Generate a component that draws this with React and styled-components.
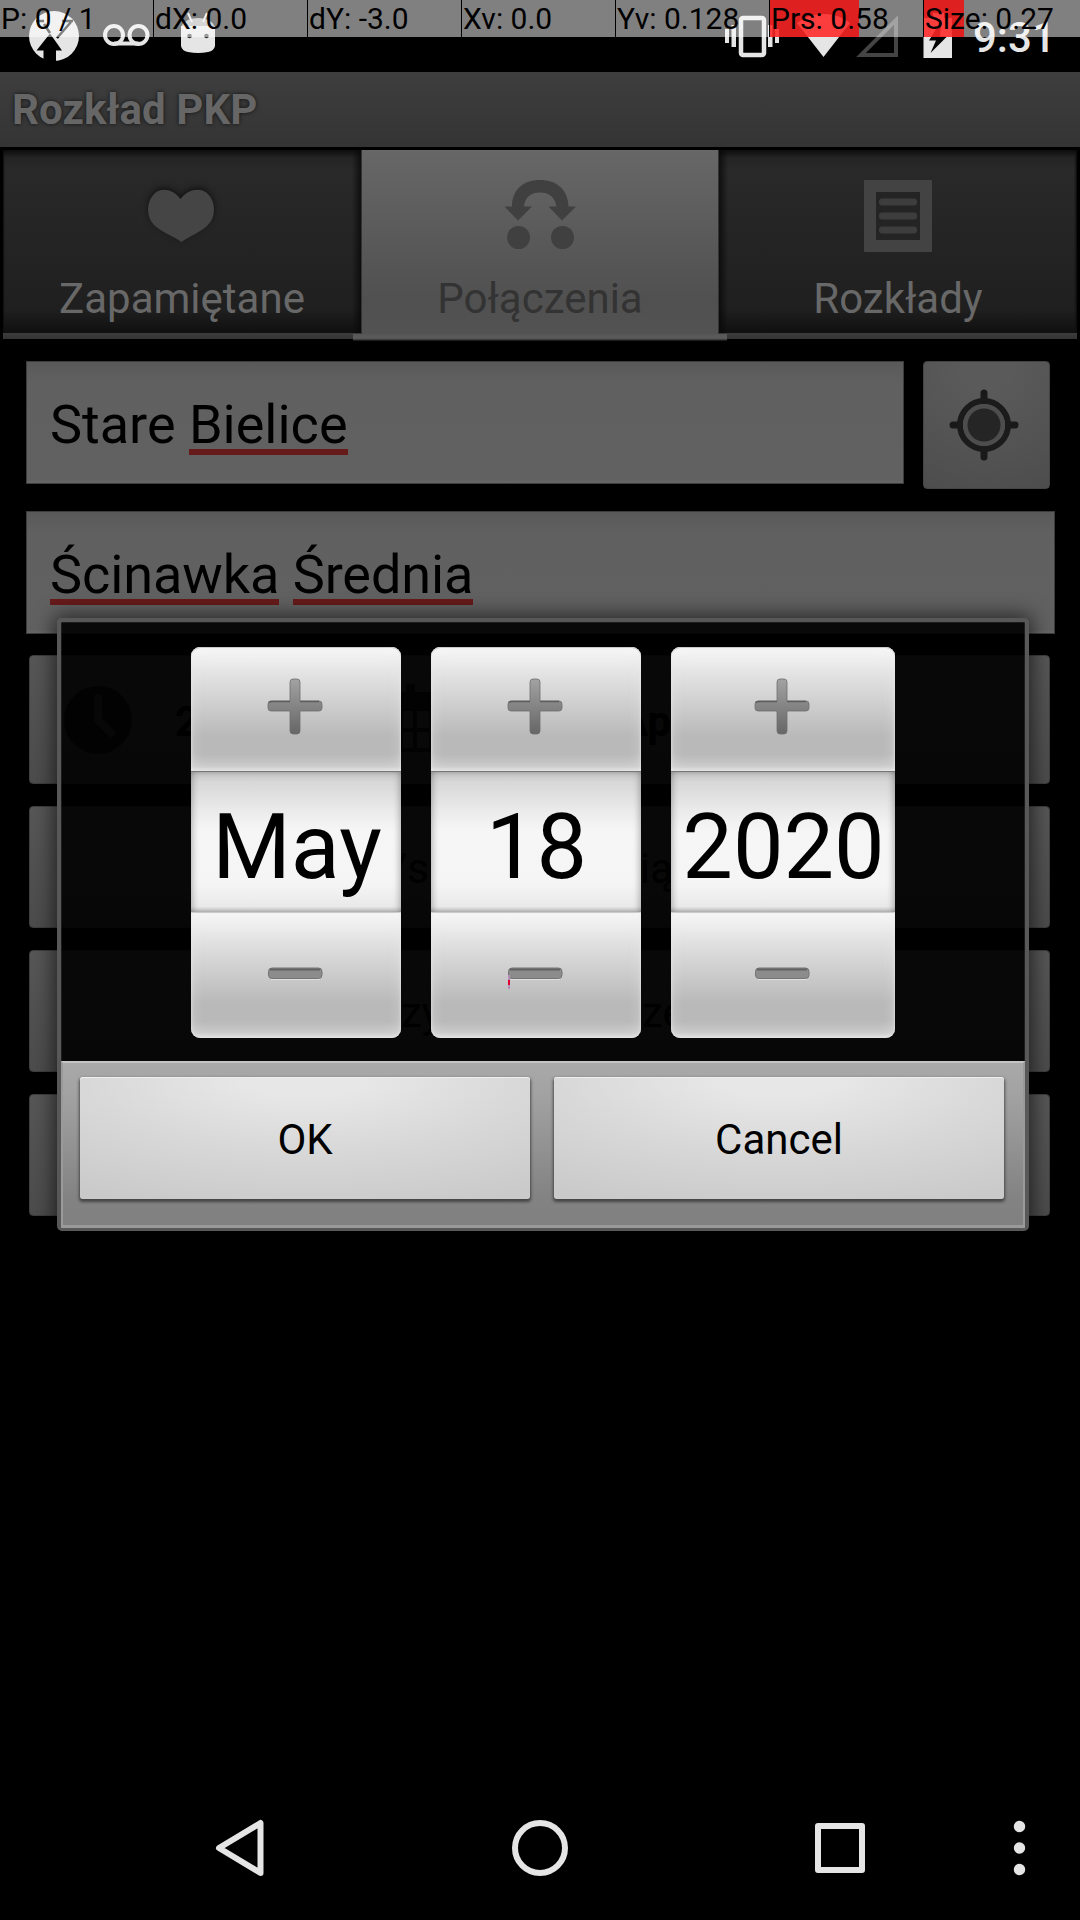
import React from "react";
import styled, { createGlobalStyle } from "styled-components";

const Global = createGlobalStyle`
  * { box-sizing: border-box; }
  body { margin: 0; background: #000; }
`;

const Screen = styled.div`
  position: relative;
  display: flex;
  flex-direction: column;
  width: 1080px;
  height: 1920px;
  overflow: hidden;
  background: #000;
  font-family: Roboto, "Noto Sans", sans-serif;
`;

/* status bar */
const StatusBar = styled.header`
  display: flex;
  justify-content: space-between;
  flex: none;
  height: 72px;
`;
const StatusIcons = styled.svg`
  display: block;
  height: 72px;
  width: ${(p) => p.$w}px;
`;
const StatusRight = styled.div`
  display: flex;
`;
const Clock = styled.div`
  width: 108px;
  padding: 13px 0 0 1px;
  font-size: 42px;
  line-height: 49px;
  font-weight: 500;
  color: #e5e5e5;
`;

/* pointer-location readout */
const PointerBar = styled.div`
  position: absolute;
  top: 0;
  left: 0;
  width: 1080px;
  height: 37px;
  display: flex;
  gap: 1px;
`;
const PointerCell = styled.div`
  flex: none;
  width: ${(p) => p.$w ?? 153}px;
  height: 37px;
  padding-left: 1px;
  white-space: nowrap;
  font-size: 30px;
  line-height: 37px;
  color: #000;
  background: ${(p) =>
    p.$fill
      ? `linear-gradient(90deg, rgba(255,0,0,.75) ${p.$fill}px, transparent ${p.$fill}px), rgba(255,255,255,.5)`
      : "rgba(255,255,255,.5)"};
  box-shadow: 1px 0 0 #000;
`;

const TitleBar = styled.div`
  flex: none;
  height: 75px;
  padding-left: 12px;
  font-size: 42px;
  line-height: 75px;
  font-weight: 700;
  letter-spacing: 0.1px;
  color: #666;
  text-shadow: 0 0 4px rgba(0, 0, 0, 0.7);
  background: linear-gradient(#3e3e3e, #343434);
`;

/* tabs */
const Tabs = styled.nav`
  flex: none;
  display: flex;
  height: 192px;
  margin-top: 3px;
  padding: 0 3px;
`;
const Tab = styled.div`
  display: flex;
  flex-direction: column;
  align-items: center;
  width: 358px;
  height: 189px;
  color: #686868;
  background: linear-gradient(#3c3c3c, #343434) no-repeat 0 100% / 100% 6px,
    linear-gradient(90deg, #0d0d0d, transparent 2px, transparent 349px, rgba(8, 8, 8, 0.8)),
    linear-gradient(#0d0d0d, #242424 8px, #292929 20px, #1f1f1f 160px, #0f0f0f 183px);
`;
const RightTab = styled(Tab)`
  background: linear-gradient(#3c3c3c, #343434) no-repeat 0 100% / 100% 6px,
    linear-gradient(90deg, rgba(8, 8, 8, 0.8), transparent 9px, transparent 355px, #0d0d0d),
    linear-gradient(#0d0d0d, #242424 8px, #292929 20px, #1f1f1f 160px, #0f0f0f 183px);
`;
const ActiveTab = styled(Tab)`
  position: relative;
  color: #333;
  background: linear-gradient(#676767, #505050 80%, #535353);
  border-left: 1px solid #333;
  border-right: 1px solid #333;
  &::after {
    content: "";
    position: absolute;
    left: -9px;
    right: -9px;
    top: 184px;
    height: 7px;
    background: linear-gradient(#565656, #5b5b5b 60%, #4a4a4a 75%, #1c1c1c 90%);
  }
`;
const TabIcon = styled.svg`
  display: block;
  width: 96px;
  height: 96px;
  margin-top: 18px;
`;
const HeartShape = styled.path`
  fill: #454545;
  filter: drop-shadow(0 -2px 3px #111);
`;
const TabLabel = styled.span`
  margin-top: 10px;
  font-size: 42px;
  line-height: 49px;
`;

/* form */
const Form = styled.main`
  display: flex;
  flex-direction: column;
  padding: 19px 25px 0 26px;
`;
const FieldRow = styled.div`
  display: flex;
  gap: 19px;
  height: 150px;
`;
const Field = styled.div`
  flex: none;
  width: ${(p) => p.$w}px;
  height: 123px;
  padding: 31px 0 0 23px;
  font-size: 54px;
  line-height: 63px;
  letter-spacing: ${(p) => p.$tracking ?? 0}px;
  color: #000;
  border: 1px solid #3c3c3c;
  background: linear-gradient(#595959, #606060 20px, #616161 118px, #686868);
`;
const Misspelt = styled.span`
  background: linear-gradient(#671a1a, #671a1a) no-repeat 0 calc(100% - 1px) / 100% 6px;
`;
const LocateButton = styled.div`
  flex: none;
  display: flex;
  justify-content: center;
  width: 127px;
  height: 128px;
  padding-top: 27px;
  border: 1px solid #444;
  border-radius: 4px;
  background: radial-gradient(circle at 50% 0, #5a5a5a 20%, #4d4d4d 100%);
`;
const LocateIcon = styled.svg`
  width: 76px;
  height: 72px;
  margin-right: 5px;
`;
const ButtonList = styled.div`
  display: flex;
  flex-direction: column;
  gap: 22px;
  margin: -6px 5px 0 3px;
`;
const OptionButton = styled.div`
  display: flex;
  align-items: center;
  height: ${(p) => p.$h ?? 122}px;
  border: 1px solid #3e3e3e;
  border-radius: 4px;
  background: linear-gradient(#565656, #4c4c4c);
  font-size: 42px;
  line-height: 49px;
  font-weight: ${(p) => (p.$bold ? 700 : 400)};
  color: #000;
`;
const OptionIcon = styled.svg`
  flex: none;
  width: 70px;
  height: 72px;
  margin-left: ${(p) => p.$gap}px;
`;
const Snippet = styled.span`
  flex: none;
  width: ${(p) => p.$w}px;
  margin-left: ${(p) => p.$gap}px;
  padding-top: 3px;
  white-space: nowrap;
`;

/* dialog */
const Dialog = styled.section`
  position: absolute;
  left: 57px;
  top: 618px;
  width: 972px;
  height: 613px;
  display: flex;
  flex-direction: column;
  border: 4px solid #585858;
  border-radius: 5px;
  background: rgba(0, 0, 0, 0.9);
  background-clip: padding-box;
  box-shadow: 0 0 20px 3px rgba(0, 0, 0, 0.6), inset 0 0 0 1px rgba(90, 90, 90, 0.25);
`;
const Pickers = styled.div`
  flex: none;
  display: flex;
  gap: 30px;
  height: 439px;
  padding: 25px 0 0 130px;
`;
const Picker = styled.div`
  display: flex;
  flex-direction: column;
  width: ${(p) => p.$w}px;
`;
const Stepper = styled.button`
  position: relative;
  display: flex;
  justify-content: center;
  flex: none;
  height: ${(p) => (p.$up ? 124 : 126)}px;
  padding: 0 3px 0 0;
  border: 0;
  border-radius: ${(p) => (p.$up ? "9px 9px 0 0" : "0 0 9px 9px")};
  background: linear-gradient(#f8f8f8, #e0e0e0 25%, #b9b9b9 72%, #b9b9b9 86%, #c8c8c8 96%, #dedede);
  box-shadow: inset 0 0 3px #e8e8e8, inset 0 0 14px rgba(240, 240, 240, 0.45), inset 0 1px 0 #aaa;
`;
const StepIcon = styled.svg`
  width: 60px;
  height: 64px;
  margin-top: 28px;
`;
const Value = styled.div`
  flex: none;
  height: 141px;
  border-top: 1px solid #777;
  padding-left: ${(p) => p.$nudge ?? 0}px;
  font-size: 90px;
  line-height: 152px;
  text-align: center;
  color: #000;
  background: linear-gradient(#c4c4c4, #d7d7d7 7%, #ebebeb 28%, #f6f6f6 42%, #f5f5f5 80%, #e9e9e9 96%, #c6c6c6);
  box-shadow: inset 4px 0 6px -2px rgba(0, 0, 0, 0.25), inset -4px 0 6px -2px rgba(0, 0, 0, 0.25);
`;
const TouchMark = styled.i`
  position: absolute;
  left: 77px;
  top: 63px;
  width: 2px;
  height: 14px;
  background: linear-gradient(#b58cba 35%, #dd0030 35%, #dd0030 70%, #b58cba 70%);
`;
const Footer = styled.footer`
  flex: none;
  display: flex;
  gap: 24px;
  height: 167px;
  padding: 14px 17px 0;
  border: 2px solid #9a9a9a;
  border-top-color: #c4c4c4;
  border-bottom-width: 3px;
  background: linear-gradient(#a9a9a9, #a2a2a2 20%, #838383 82%, #808080);
`;
const DialogButton = styled.button`
  flex: none;
  width: 450px;
  height: 122px;
  padding: 3px 0 0;
  border: 0;
  border-radius: 3px;
  font: 400 42px/49px Roboto, "Noto Sans", sans-serif;
  color: #000;
  background: radial-gradient(ellipse 90% 110% at 50% 0, #e7e7e7 15%, #d8d8d8 55%, #cacaca 100%);
  box-shadow: inset 0 1px 0 #eee, 0 2px 3px 1px rgba(50, 50, 50, 0.75);
`;

/* navigation bar */
const NavBar = styled.nav`
  position: absolute;
  left: 0;
  bottom: 0;
  width: 1080px;
  height: 144px;
  display: flex;
  align-items: center;
  padding-left: 204px;
`;
const NavIcon = styled.svg`
  width: 72px;
  height: 72px;
  margin-right: ${(p) => p.$gap ?? 0}px;
  fill: none;
  stroke: #e5e5e5;
  stroke-width: 6;
  stroke-linejoin: round;
`;

const NotificationIcons = () => (
  <StatusIcons $w={230} viewBox="0 0 230 72">
    <circle cx="54" cy="36" r="25" fill="#e5e5e5" />
    <path d="M36.500 50.500 50 33.500 62 50.500H56V62H43.500V50.500Z" fill="#000" />
    <path d="M36 21H44M44 24 50 33M57 38 71 22M62 21H73" fill="none" stroke="#000" strokeWidth="2.500" />
    <g fill="none" stroke="#e5e5e5" strokeWidth="4">
      <circle cx="114" cy="35" r="9" />
      <circle cx="138.500" cy="35" r="9" />
      <path d="M114 43.500H138.500" />
    </g>
    <path d="M181 26H215V46Q214 51 208 52Q198 54 188 52Q182 51 181 46Z" fill="#e5e5e5" />
    <path d="M181.500 26Q186 18 198 18Q210 18 214.500 26Z" fill="#aaa" />
    <path d="M188 13 192 22M207 13 203 22" stroke="#e5e5e5" strokeWidth="2" />
    <circle cx="189.500" cy="36" r="2.300" fill="#333" />
    <circle cx="206.500" cy="36" r="2.300" fill="#333" />
  </StatusIcons>
);

const SystemIcons = () => (
  <StatusIcons $w={252} viewBox="720 0 252 72">
    <g fill="#e5e5e5">
      <path d="M725 29h4v14h-4ZM731.500 25h4.500v22h-4.500ZM768 25h4.500v22H768ZM775 29h4v14h-4Z" />
      <path d="M823.500 57 797 23Q808 14 823.500 14T850 23Z" />
      <path d="M933 13h11v5h8V58H923.500V18H933Z" />
    </g>
    <rect x="741" y="18" width="23" height="37" rx="2" fill="none" stroke="#e5e5e5" strokeWidth="4.500" />
    <path d="M861 55H896V20Z" fill="none" stroke="#444" strokeWidth="4" />
    <path d="M941 21 929 40.500H936L930.500 53 947 36.500H940Z" fill="#000" />
  </StatusIcons>
);

const readout = [
  { text: "P: 0 / 1" },
  { text: "dX: 0.0" },
  { text: "dY: -3.0" },
  { text: "Xv: 0.0" },
  { text: "Yv: 0.128" },
  { text: "Prs: 0.58", fill: 89 },
  { text: "Size: 0.27", fill: 40, w: 156 },
];

const pickers = [
  { value: "May", w: 210, nudge: 2 },
  { value: "18", w: 210, nudge: 1, mark: true },
  { value: "2020", w: 224, nudge: 1 },
];

const PlusIcon = () => (
  <StepIcon viewBox="0 0 60 64">
    <defs>
      <linearGradient id="plus" x1="0" y1="0" x2="0" y2="1">
        <stop offset="0" stopColor="#a2a2a2" />
        <stop offset="1" stopColor="#666" />
      </linearGradient>
    </defs>
    <path
      d="M28 4h4q3 0 3 3V26H54q3 0 3 3v4q0 3-3 3H35V56q0 3-3 3H28q-3 0-3-3V36H6q-3 0-3-3V29q0-3 3-3H25V7q0-3 3-3Z"
      fill="url(#plus)"
      stroke="#707070"
      strokeWidth=".8"
    />
    <path d="M4 27.500Q5 26.500 7 26.500H25M35 26.500H54" stroke="#5c5c5c" strokeWidth="1.500" fill="none" />
  </StepIcon>
);
const MinusIcon = () => (
  <StepIcon viewBox="0 0 60 64">
    <rect x="3.500" y="28" width="53.500" height="10.500" rx="3.500" fill="#8c8c8c" stroke="#747474" />
    <path d="M5 29.500H55" stroke="#626262" strokeWidth="2" />
    <path d="M6 39.500H55" stroke="#e0e0e0" strokeWidth="1" />
  </StepIcon>
);

export default function App() {
  return (
    <Screen>
      <Global />
      <StatusBar>
        <NotificationIcons />
        <StatusRight>
          <SystemIcons />
          <Clock>9:31</Clock>
        </StatusRight>
      </StatusBar>
      <TitleBar>Rozkład PKP</TitleBar>
      <Tabs>
        <Tab>
          <TabIcon viewBox="134 168 96 96">
            <HeartShape d="M180.500 199C188 189 201 187 208 194C216 202 216 217 208 225C201 232 190 236 181.500 242C173 236 161 232 154 225C146 217 146 202 154 194C161 187 173 189 180.500 199Z" />
          </TabIcon>
          <TabLabel>Zapamiętane</TabLabel>
        </Tab>
        <ActiveTab>
          <TabIcon viewBox="492 168 96 96" fill="#404040">
            <path d="M504.500 206.500H512C512 190 523 180 540 180S568 190 568.500 206.500H576L562 220.500 548.500 206.500H556.500C555 197 549 192.500 540 192.500S525 197 524 206.500H532L518 220.500Z" />
            <circle cx="518.500" cy="237.500" r="11.500" />
            <circle cx="562.500" cy="237.500" r="11.500" />
          </TabIcon>
          <TabLabel>Połączenia</TabLabel>
        </ActiveTab>
        <RightTab>
          <TabIcon viewBox="850 168 96 96">
            <rect x="864" y="180" width="68" height="72" rx="1" fill="#434343" />
            <rect x="876" y="192" width="44" height="48" fill="#242424" />
            <g fill="#3d3d3d">
              <rect x="879" y="198.500" width="38" height="7" rx="3" />
              <rect x="879" y="212.500" width="38" height="7" rx="3" />
              <rect x="879" y="226.500" width="38" height="7" rx="3" />
            </g>
          </TabIcon>
          <TabLabel>Rozkłady</TabLabel>
        </RightTab>
      </Tabs>
      <Form>
        <FieldRow>
          <Field $w={878}>
            Stare <Misspelt>Bielice</Misspelt>
          </Field>
          <LocateButton>
            <LocateIcon viewBox="-38 -36 76 72">
              <path d="M0-32V-26M0 32V26M-31 0H-26M31 0H26" stroke="#191919" strokeWidth="7" strokeLinecap="round" />
              <circle r="24" fill="none" stroke="#1b1b1b" strokeWidth="6" />
              <circle r="21" fill="#4d4d4d" />
              <circle r="16.500" fill="#252525" />
            </LocateIcon>
          </LocateButton>
        </FieldRow>
        <FieldRow>
          <Field $w={1029} $tracking={-0.08}>
            <Misspelt>Ścinawka</Misspelt> <Misspelt>Średnia</Misspelt>
          </Field>
        </FieldRow>
        <ButtonList>
          <OptionButton $h={129} $bold>
            <OptionIcon $gap={33} viewBox="0 0 70 72">
              <circle cx="35" cy="36" r="34" fill="#1c1c1c" />
              <path d="M35 14V36L48 49" fill="none" stroke="#4a4a4a" strokeWidth="8" strokeLinecap="round" />
            </OptionIcon>
            <Snippet $gap={42} $w={24}>2</Snippet>
            <OptionIcon $gap={183} viewBox="0 0 70 72">
              <path
                d="M3 8H24V1q5-4 9 0V8H49V1q4-4 8 0V8H66V68H3ZM7 27V44H17V27ZM21 27V44H31V27ZM35 27V44H47V27ZM51 27V44H61V27ZM7 48V64H17V48ZM21 48V64H31V48ZM35 48V64H47V48ZM51 48V64H61V48Z"
                fill="#1c1c1c"
                fillRule="evenodd"
              />
            </OptionIcon>
            <Snippet $gap={168} $w={52}>Ap</Snippet>
          </OptionButton>
          <OptionButton>
            <Snippet $gap={360} $w={36}>/s</Snippet>
            <Snippet $gap={214} $w={40}>ią</Snippet>
          </OptionButton>
          <OptionButton>
            <Snippet $gap={371} $w={40}>zy</Snippet>
            <Snippet $gap={201} $w={40}>ze</Snippet>
          </OptionButton>
          <OptionButton />
        </ButtonList>
      </Form>
      <Dialog>
        <Pickers>
          {pickers.map((p) => (
            <Picker key={p.value} $w={p.w}>
              <Stepper $up>
                <PlusIcon />
              </Stepper>
              <Value $nudge={p.nudge}>{p.value}</Value>
              <Stepper>
                <MinusIcon />
                {p.mark && <TouchMark />}
              </Stepper>
            </Picker>
          ))}
        </Pickers>
        <Footer>
          <DialogButton>OK</DialogButton>
          <DialogButton>Cancel</DialogButton>
        </Footer>
      </Dialog>
      <NavBar>
        <NavIcon $gap={228} viewBox="204 1812 72 72">
          <path d="M219 1848 260.500 1823V1873Z" />
        </NavIcon>
        <NavIcon $gap={228} viewBox="0 0 72 72">
          <circle cx="36" cy="36" r="25" />
        </NavIcon>
        <NavIcon $gap={107} viewBox="0 0 72 72">
          <rect x="14" y="14" width="44" height="44" />
        </NavIcon>
        <NavIcon viewBox="0 0 72 72">
          <g fill="#e5e5e5" stroke="none">
            <circle cx="36.500" cy="14.500" r="5.700" />
            <circle cx="36.500" cy="36" r="5.700" />
            <circle cx="36.500" cy="57.500" r="5.700" />
          </g>
        </NavIcon>
      </NavBar>
      <PointerBar>
        {readout.map((c) => (
          <PointerCell key={c.text} $fill={c.fill} $w={c.w}>
            {c.text}
          </PointerCell>
        ))}
      </PointerBar>
    </Screen>
  );
}
